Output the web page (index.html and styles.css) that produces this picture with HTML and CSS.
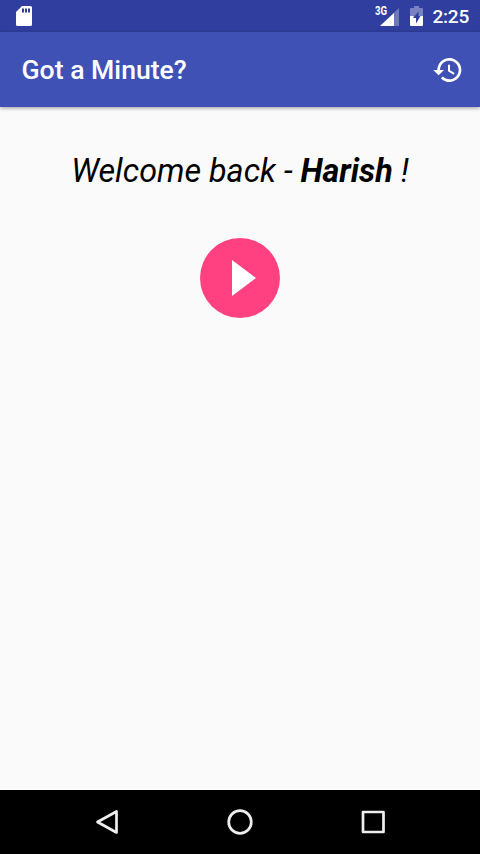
FILE: index.html
```html
<!DOCTYPE html>
<html lang="en">

<head>
    <meta charset="utf-8">
    <meta name="viewport" content="width=device-width, initial-scale=1.0">
    <title>Got a Minute?</title>
    <link rel="stylesheet" href="styles.css">
</head>

<body>
    <div class="statusbar">
        <svg class="sdcard" width="16" height="20" viewBox="0 0 16 20">
            <path fill="#fff" fill-rule="evenodd" d="M6 0h8.500a1.500 1.500 0 0 1 1.500 1.500v17a1.500 1.500 0 0 1-1.500 1.500h-13A1.500 1.500 0 0 1 0 18.500V6zM6 2.500v4h2v-4zM9 2.500v4h2v-4zM12 2.500v4h2v-4z" />
        </svg>
        <div class="status-right">
            <span class="network">3G</span>
            <svg class="signal" width="19" height="18" viewBox="0 0 19 18">
                <path fill="#fff" fill-opacity=".3" d="M19 0v18H0z" />
                <path fill="#fff" d="M14 5v13H0z" />
            </svg>
            <svg class="battery" width="13" height="20" viewBox="0 0 13 20">
                <path fill="#fff" fill-opacity=".35" d="M4 0h5v2h3q1 0 1 1v7H8.500V5.500L3 12H0V3q0-1 1-1h3z" />
                <path fill="#fff" d="M0 10h4l-1 2h3v5.500L10.500 10H13v9q0 1-1 1H1q-1 0-1-1z" />
            </svg>
            <span class="clock">2:25</span>
        </div>
    </div>

    <header>
        <h1>Got a Minute?</h1>
        <svg class="history" width="32" height="32" viewBox="0 0 24 24">
            <path fill="#fff" d="M13 3a9 9 0 0 0-9 9H1l3.890 3.890.070.140L9 12H6a7 7 0 1 1 2.060 4.940l-1.420 1.420A9 9 0 1 0 13 3zm-1 5v5l4.280 2.540.720-1.210-3.500-2.080V8z" />
        </svg>
    </header>

    <main>
        <p class="welcome">Welcome back - <b>Harish</b> !</p>
        <button class="play" aria-label="Play">
            <svg width="80" height="80" viewBox="0 0 80 80">
                <path fill="#fff" d="M32 22v36l24-18z" />
            </svg>
        </button>
    </main>

    <nav>
        <svg width="26" height="28" viewBox="0 0 26 28">
            <path d="M22.500 3.500v21L3.500 14z" />
        </svg>
        <svg width="26" height="28" viewBox="0 0 26 28">
            <circle cx="13" cy="14" r="11.300" />
        </svg>
        <svg width="26" height="28" viewBox="0 0 26 28">
            <path d="M3 4h20.500v20H3z" />
        </svg>
    </nav>
</body>

</html>
```

FILE: styles.css
```css
* {
    margin: 0;
    box-sizing: border-box;
}

body {
    display: flex;
    flex-direction: column;
    height: 854px;
    background-color: #fafafa;
    font-family: Roboto, sans-serif;
    overflow: hidden;
}

.statusbar {
    display: flex;
    justify-content: space-between;
    height: 32px;
    padding: 6px 11px 0 16px;
    background-color: #303f9f;
    color: white;
}

.status-right {
    display: flex;
    align-items: flex-start;
}

.network {
    font-size: 12px;
    font-weight: 700;
    line-height: 11px;
    margin-right: -10px;
    transform: scaleX(0.8);
    transform-origin: left;
}

.signal {
    margin: 2px 11px 0 0;
}

.battery {
    margin-right: 9px;
}

.clock {
    font-size: 19px;
    font-weight: 500;
    line-height: 22px;
    letter-spacing: -0.2px;
}

header {
    display: flex;
    justify-content: space-between;
    align-items: center;
    height: 75px;
    padding: 0 16px 0 21.5px;
    background-color: #3f51b5;
    color: white;
    box-shadow: 0 1px 4px rgba(0, 0, 0, 0.4);
}

h1 {
    font-size: 26.6px;
    font-weight: 500;
}

main {
    flex: 1;
    display: flex;
    flex-direction: column;
    align-items: center;
    padding-top: 44px;
}

.welcome {
    font-size: 32.3px;
    font-style: italic;
    line-height: 40px;
    color: black;
    white-space: nowrap;
}

.play {
    width: 80px;
    height: 80px;
    margin-top: 47px;
    padding: 0;
    border: none;
    border-radius: 50%;
    background-color: #ff4081;
}

nav {
    display: flex;
    justify-content: center;
    align-items: center;
    gap: 107px;
    height: 64px;
    background-color: black;
}

nav svg {
    fill: none;
    stroke: #eee;
    stroke-width: 2.7;
    stroke-linejoin: round;
}
```
